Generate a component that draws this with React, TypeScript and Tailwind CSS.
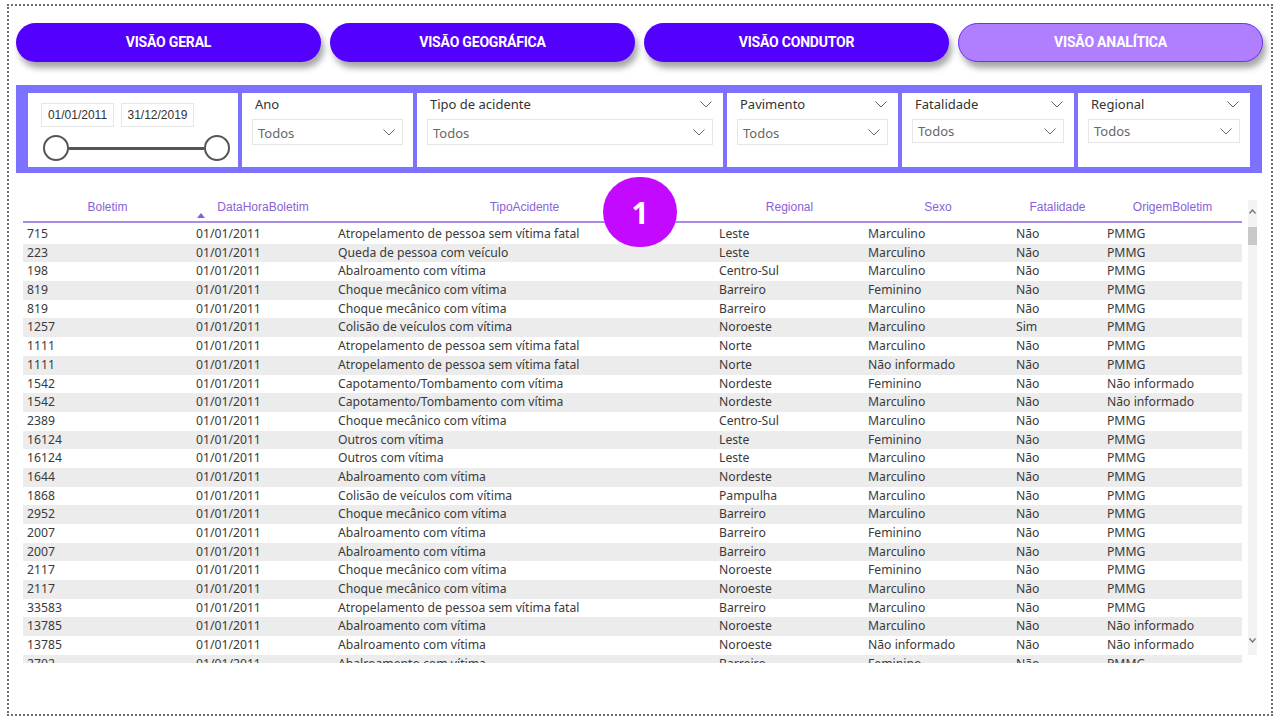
import { ReactNode } from 'react';

const tabs = [
  { label: 'VISÃO GERAL', active: false },
  { label: 'VISÃO GEOGRÁFICA', active: false },
  { label: 'VISÃO CONDUTOR', active: false },
  { label: 'VISÃO ANALÍTICA', active: true },
];

const columns = ['Boletim', 'DataHoraBoletim', 'TipoAcidente', 'Regional', 'Sexo', 'Fatalidade', 'OrigemBoletim'];

const rows: string[][] = [
  ['715', 'Atropelamento de pessoa sem vítima fatal', 'Leste', 'Marculino', 'Não', 'PMMG'],
  ['223', 'Queda de pessoa com veículo', 'Leste', 'Marculino', 'Não', 'PMMG'],
  ['198', 'Abalroamento com vítima', 'Centro-Sul', 'Marculino', 'Não', 'PMMG'],
  ['819', 'Choque mecânico com vítima', 'Barreiro', 'Feminino', 'Não', 'PMMG'],
  ['819', 'Choque mecânico com vítima', 'Barreiro', 'Marculino', 'Não', 'PMMG'],
  ['1257', 'Colisão de veículos com vítima', 'Noroeste', 'Marculino', 'Sim', 'PMMG'],
  ['1111', 'Atropelamento de pessoa sem vítima fatal', 'Norte', 'Marculino', 'Não', 'PMMG'],
  ['1111', 'Atropelamento de pessoa sem vítima fatal', 'Norte', 'Não informado', 'Não', 'PMMG'],
  ['1542', 'Capotamento/Tombamento com vítima', 'Nordeste', 'Feminino', 'Não', 'Não informado'],
  ['1542', 'Capotamento/Tombamento com vítima', 'Nordeste', 'Marculino', 'Não', 'Não informado'],
  ['2389', 'Choque mecânico com vítima', 'Centro-Sul', 'Marculino', 'Não', 'PMMG'],
  ['16124', 'Outros com vítima', 'Leste', 'Feminino', 'Não', 'PMMG'],
  ['16124', 'Outros com vítima', 'Leste', 'Marculino', 'Não', 'PMMG'],
  ['1644', 'Abalroamento com vítima', 'Nordeste', 'Marculino', 'Não', 'PMMG'],
  ['1868', 'Colisão de veículos com vítima', 'Pampulha', 'Marculino', 'Não', 'PMMG'],
  ['2952', 'Choque mecânico com vítima', 'Barreiro', 'Marculino', 'Não', 'PMMG'],
  ['2007', 'Abalroamento com vítima', 'Barreiro', 'Feminino', 'Não', 'PMMG'],
  ['2007', 'Abalroamento com vítima', 'Barreiro', 'Marculino', 'Não', 'PMMG'],
  ['2117', 'Choque mecânico com vítima', 'Noroeste', 'Feminino', 'Não', 'PMMG'],
  ['2117', 'Choque mecânico com vítima', 'Noroeste', 'Marculino', 'Não', 'PMMG'],
  ['33583', 'Atropelamento de pessoa sem vítima fatal', 'Barreiro', 'Marculino', 'Não', 'PMMG'],
  ['13785', 'Abalroamento com vítima', 'Noroeste', 'Marculino', 'Não', 'Não informado'],
  ['13785', 'Abalroamento com vítima', 'Noroeste', 'Não informado', 'Não', 'Não informado'],
  ['2702', 'Abalroamento com vítima', 'Barreiro', 'Feminino', 'Não', 'PMMG'],
];

const gridCols = 'grid grid-cols-[169px_142px_381px_149px_148px_91px_139px]';

const Chevron = () => (
  <svg width="12" height="7" viewBox="0 0 12 7">
    <polyline points="0.5,0.5 6,6 11.5,0.5" fill="none" stroke="#6b6b6b" strokeWidth="1" />
  </svg>
);

const SmallArrow = ({ up = false }: { up?: boolean }) => (
  <svg width="7" height="5" viewBox="0 0 7 5">
    <polyline
      points={up ? '0.5,4.5 3.5,1 6.5,4.5' : '0.5,0.5 3.5,4 6.5,0.5'}
      fill="none"
      stroke="#707070"
      strokeWidth="1.2"
    />
  </svg>
);

const FilterBox = ({
  width,
  label,
  labelChevron = true,
  compact = false,
}: {
  width: string;
  label: string;
  labelChevron?: boolean;
  compact?: boolean;
}) => (
  <div className={`${width} flex h-[74px] flex-col bg-white pl-[10px] pr-[10px] pt-[3px]`}>
    <div className="flex h-[16px] items-center justify-between pl-[3px] pr-[1px]">
      <span className="text-[13px] leading-[16px] text-[#333]">{label}</span>
      {labelChevron && <Chevron />}
    </div>
    <div
      className={`${compact ? 'mt-[7px] h-[24px]' : 'mt-[7px] h-[26px]'} flex items-center justify-between border border-[#e6e6e6] pl-[5px] pr-[7px]`}
    >
      <span className={`${compact ? 'pt-[1px]' : 'pt-[3px]'} text-[13px] text-[#666]`}>Todos</span>
      <Chevron />
    </div>
  </div>
);

const Cell = ({ children }: { children: ReactNode }) => (
  <div className="truncate px-[4px]">{children}</div>
);

export default function App() {
  return (
    <div className="relative h-[720px] w-[1280px] overflow-hidden bg-white pl-[7px] pt-[4px] font-['Noto_Sans',sans-serif]">
      <div className="h-[712px] w-[1266px] border-2 border-dotted border-[#6e6e6e] px-[7px] pt-[17px]">
        {/* navegação */}
        <div className="flex gap-[9px]">
          {tabs.map((tab) => (
            <div
              key={tab.label}
              className={`flex h-[39px] w-[305px] items-center justify-center rounded-full font-['Roboto',sans-serif] text-[14px] font-bold tracking-[-0.2px] text-white shadow-[3px_6px_6px_rgba(0,0,0,0.35)] ${
                tab.active ? 'border-[1.5px] border-[#6a2cff] bg-[#b07fff]' : 'bg-[#5400ff]'
              }`}
            >
              {tab.label}
            </div>
          ))}
        </div>

        {/* filtros */}
        <div className="mt-[23px] flex h-[88px] w-[1246px] gap-[4px] bg-[#7c72ff] pl-[12px] pt-[8px]">
          <div className="flex h-[74px] w-[210px] flex-col bg-white pl-[13px] pt-[10px]">
            <div className="flex gap-[7px] font-['Liberation_Sans',sans-serif] text-[12px] text-[#333]">
              <div className="flex h-[24px] w-[73px] items-center justify-center border border-[#e6e6e6]">01/01/2011</div>
              <div className="flex h-[24px] w-[73px] items-center justify-center border border-[#e6e6e6]">31/12/2019</div>
            </div>
            <div className="ml-[2px] mt-[8px] flex items-center">
              <div className="h-[26px] w-[26px] rounded-full border-2 border-[#555] bg-white" />
              <div className="h-[3px] w-[135px] bg-[#555]" />
              <div className="h-[26px] w-[26px] rounded-full border-2 border-[#555] bg-white" />
            </div>
          </div>
          <FilterBox width="w-[171px]" label="Ano" labelChevron={false} />
          <FilterBox width="w-[306px]" label="Tipo de acidente" />
          <FilterBox width="w-[171px]" label="Pavimento" />
          <FilterBox width="w-[172px]" label="Fatalidade" compact />
          <FilterBox width="w-[172px]" label="Regional" compact />
        </div>

        {/* tabela */}
        <div className="ml-[7px] mt-[25px] flex">
          <div className="w-[1219px]">
            <div
              className={`${gridCols} relative h-[25px] border-b-2 border-[#a98ce3] pt-[2px] text-center font-['Liberation_Sans',sans-serif] text-[12px] leading-[14px] text-[#8a5fd8]`}
            >
              {columns.map((c) => (
                <div key={c}>{c}</div>
              ))}
              <svg className="absolute bottom-[3px] left-[174px]" width="8" height="5" viewBox="0 0 8 5">
                <polygon points="0,5 4,0 8,5" fill="#8a5fd8" />
              </svg>
            </div>
            <div className="h-[440px] overflow-hidden pt-[2px] text-[12.2px] text-[#3a3a3a]">
              {rows.map((r, i) => (
                <div
                  key={i}
                  className={`${gridCols} h-[18.7px] items-center leading-[18.7px] ${i % 2 === 1 ? 'bg-[#ececec]' : 'bg-white'}`}
                >
                  <Cell>{r[0]}</Cell>
                  <Cell>01/01/2011</Cell>
                  <Cell>{r[1]}</Cell>
                  <Cell>{r[2]}</Cell>
                  <Cell>{r[3]}</Cell>
                  <Cell>{r[4]}</Cell>
                  <Cell>{r[5]}</Cell>
                </div>
              ))}
            </div>
          </div>
          <div className="ml-[6px] mt-[2px] flex h-[455px] w-[9px] flex-col items-center bg-[#f3f3f3] pt-[9px]">
            <SmallArrow up />
            <div className="mt-[13px] h-[18px] w-[9px] bg-[#c8c8c8]" />
            <div className="flex-1" />
            <div className="mb-[12px]">
              <SmallArrow />
            </div>
          </div>
        </div>
      </div>

      {/* marcador */}
      <div className="absolute left-[603px] top-[177px] flex h-[70px] w-[74px] items-center justify-center rounded-full bg-[#c309ff] font-['Open_Sans',sans-serif] text-[30px] font-bold text-white">
        1
      </div>
    </div>
  );
}
